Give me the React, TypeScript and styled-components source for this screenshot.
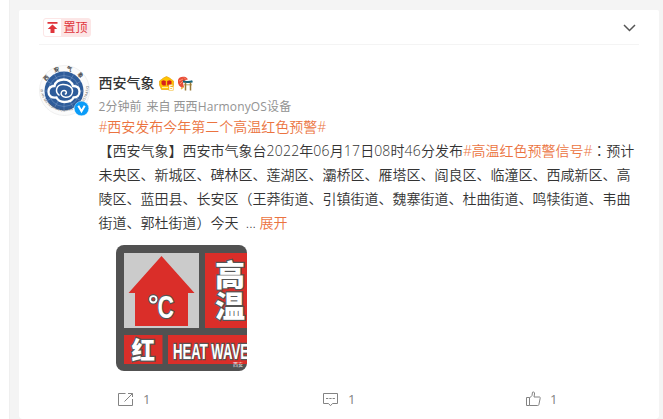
import { ReactNode } from 'react';
import styled, { createGlobalStyle } from 'styled-components';

const GlobalStyle = createGlobalStyle`
  * {
    box-sizing: border-box;
  }
  body {
    margin: 0;
    background: #fff;
    overflow: hidden;
    font-family: 'Open Sans', 'Noto Sans CJK SC', sans-serif;
  }
`;

const Page = styled.div`
  height: 419px;
  margin-left: 9px;
  padding: 10px 4px 0 9px;
  background: #f4f4f4;
  border-left: 1px solid #efefef;
`;

const Card = styled.article`
  height: 409px;
  padding: 0 20px;
  background: #fff;
  border-radius: 2px 2px 4px 4px;
`;

const CardHeader = styled.header`
  display: flex;
  align-items: center;
  justify-content: space-between;
  height: 35px;
  padding: 0 4px;
  border-bottom: 1px solid #f4f4f4;
`;

const PinTag = styled.div`
  display: flex;
  width: 48px;
  height: 19px;
  margin-top: 1px;
  border: 1px solid #fce6e6;
  border-radius: 3px;
  background: #fce6e6;
  overflow: hidden;
`;

const PinIcon = styled.span`
  display: flex;
  align-items: center;
  justify-content: center;
  width: 17px;
  background: #fff;
`;

const PinLabel = styled.span`
  flex: 1;
  font-size: 12px;
  line-height: 17px;
  text-align: center;
  white-space: nowrap;
  color: #e0353b;
`;

const MenuButton = styled.button`
  display: flex;
  padding: 0;
  margin: 2px -1px 0 0;
  border: none;
  background: none;
`;

const Post = styled.div`
  display: flex;
  gap: 8.6px;
  padding-top: 20px;
`;

const AvatarWrap = styled.div`
  position: relative;
  flex: none;
  width: 51px;
  height: 52px;
`;

const AvatarArt = styled.svg`
  display: block;
  overflow: visible;
`;

const Verified = styled.svg`
  position: absolute;
  right: 1px;
  bottom: 1px;
`;

const Body = styled.div`
  flex: 1;
  white-space: nowrap;
`;

const NameRow = styled.div`
  display: flex;
  align-items: center;
  height: 24px;
  margin-top: 6px;
  gap: 3px;
`;

const Name = styled.span`
  margin-right: 1px;
  font-size: 14px;
  font-weight: 500;
  line-height: 24px;
  color: #333;
`;

const Meta = styled.div`
  display: flex;
  gap: 5px;
  height: 20px;
  font-size: 12px;
  line-height: 23px;
  color: #939393;
`;

const Device = styled.span`
  margin-left: -2px;
  letter-spacing: 0.14px;
`;

const Content = styled.div`
  font-size: 14px;
  font-weight: 350;
  line-height: 24px;
  color: #333;
`;

const Line = styled.div`
  height: 24px;
`;

const Topic = styled.a`
  color: #eb7340;
`;

const Hash = styled.span`
  letter-spacing: -0.4px;
`;

const Num = styled.span`
  letter-spacing: 0.2px;
`;

// the TC face centres the full-width colon in its cell
const Colon = styled.span`
  font-family: 'Noto Sans CJK TC', sans-serif;
  line-height: 0;
`;

const Photo = styled.svg`
  display: block;
  margin: 10px 0 0 17.4px;
  border-radius: 8px;
`;

const Actions = styled.footer`
  display: grid;
  grid-template-columns: 204px 204px 1fr;
  height: 18px;
  margin-top: 19px;
  padding-left: 78px;
`;

const Action = styled.div`
  display: flex;
  align-items: center;
  gap: 9px;
  font-size: 13px;
  line-height: 18px;
  color: #838383;
`;

const sign = (key: string, children: ReactNode) => (
  <Topic key={key}>
    <Hash>#</Hash>
    {children}
    <Hash>#</Hash>
  </Topic>
);

function Avatar() {
  const rays = [0, 30, 60, 90, 120, 150];
  return (
    <AvatarWrap>
      <AvatarArt width="51" height="52" viewBox="0 0 51 52">
        <defs>
          <path id="ring-top" d="M5.5 25.500 A20 20 0 0 1 45.5 25.500" />
          <path id="ring-bottom" d="M1.2 22 A24.300 24.300 0 1 0 49.8 22" />
        </defs>
        <circle cx="25.5" cy="25.5" r="25" fill="#fbfbfb" stroke="#e9e9e9" strokeWidth=".7" />
        <circle cx="25" cy="26" r="19.5" fill="#2e5c9a" />
        <g stroke="#7c9ac4" strokeWidth=".5" fill="none">
          {rays.map((angle) => (
            <path key={angle} d="M25 6.5V45.5" transform={`rotate(${angle} 25 26)`} />
          ))}
          <circle cx="25" cy="26" r="15.5" />
        </g>
        <path
          d="M15.500 21c.5-4 4.500-6.500 9-6.500s8.500 2.500 9.500 6.500c4 0 6.500 2 6.500 5.500S38 32.500 34.500 32.500c-1.500 3.500-5 4.500-9 4.500-3.500 0-6.500-1.500-8-4.500-5 .5-8-1.500-8-5.500s2.500-6 6-6z"
          fill="#2e5c9a"
          stroke="#fff"
          strokeWidth="2.300"
        />
        <path
          d="M20.500 30.500c-5-3.500-3.500-10.500 3-11 6-.4 10.500 3 10 7-.5 4-3.500 6-7 5.800-3.500-.2-5.200-3-4-5.300 1-2 4.300-2 4.800 0 .3 1.200-.4 2-1.500 2.100"
          fill="none"
          stroke="#fff"
          strokeWidth="1.500"
        />
        <text fontSize="5.500" fontWeight="700" fill="#444" fontFamily="Noto Sans CJK SC" letterSpacing="6.200">
          <textPath href="#ring-top" startOffset="9">西安气象</textPath>
        </text>
        <text fontSize="3.500" fill="#555">
          <textPath href="#ring-bottom" textLength="78" startOffset="2">XI AN METEOROLOGICAL ADMINISTRATION</textPath>
        </text>
      </AvatarArt>
      <Verified width="15" height="15" viewBox="0 0 15 15">
        <circle cx="7.500" cy="7.500" r="7.300" fill="#0a9cf8" stroke="#fff" strokeWidth=".4" />
        <path d="M4.300 4.800L7.500 10.300L10.700 4.800" fill="none" stroke="#fff" strokeWidth="2" />
      </Verified>
    </AvatarWrap>
  );
}

function CrownBadge() {
  return (
    <svg width="15" height="15" viewBox="0 0 15 15">
      <path d="M.5 5L2.500 3.500 4.500 2 7.500.5 10.500 2 12.500 3.500 14.500 5V9L12.500 13.500H2.500L.5 9z" fill="#ffc400" stroke="#e8a010" strokeWidth=".7" />
      <path d="M2.500 5L4.500 4.200 6.800 5V9.500H4L2.500 8zM12.500 5l-2-.8L8.200 5v4.500H11L12.500 8z" fill="#d6211c" />
      <path d="M3 11.500h6" stroke="#fff199" strokeWidth="1.200" />
      <path d="M9.500 8.500h5v6h-5z" fill="#f3b51c" />
      <path d="M13.500 9.200h-2.700v4.300h2.500v-2h-2" fill="none" stroke="#fff" strokeWidth="1.100" />
    </svg>
  );
}

function FestivalBadge() {
  return (
    <svg width="16" height="15" viewBox="0 0 16 15">
      <path d="M1 4C2 1 5 .3 9 1.200l2 2L8 4.500 6 7 7 11 5 12 2 9.500 1 7z" fill="#e84d37" />
      <path d="M2 5l4-2M3 8l3-3M7 1.500l2 2" stroke="#ffb28d" strokeWidth=".7" />
      <path d="M6 5.200Q11 7 15.500 5.200" fill="none" stroke="#16647d" strokeWidth="2" />
      <path d="M7 8.800h8" stroke="#c8a85a" strokeWidth="1" />
      <path d="M8.500 6.500v8M13.500 6.500v8" stroke="#987836" strokeWidth="1.500" />
      <path d="M4 13l2.500-2" stroke="#f2b33d" strokeWidth="1.500" />
    </svg>
  );
}

function WarningSign() {
  return (
    <Photo width="131" height="126" viewBox="0 0 131 126">
      <path d="M0 0h131v126H0z" fill="#515151" />
      <path d="M8 8h75v75H8z" fill="#cbcbcb" />
      <path d="M45.500 11L78.500 48H72v33H19V48h-6.500z" fill="#da2e29" />
      <path d="M89 8h42v75H89zM8 90h38.500v29H8zM52 90h79v29H52z" fill="#da2e29" />
      <g
        fill="#fff"
        stroke="#555"
        strokeWidth="2.400"
        paintOrder="stroke"
        fontFamily="Liberation Sans, Noto Sans CJK SC, sans-serif"
        fontWeight="700"
      >
        <circle cx="37.300" cy="54.300" r="3.200" fill="none" stroke="#555" strokeWidth="4" />
        <circle cx="37.300" cy="54.300" r="3.200" fill="none" stroke="#fff" strokeWidth="1.900" />
        <text x="41.500" y="72.500" fontSize="31" textLength="16.500" lengthAdjust="spacingAndGlyphs">C</text>
        <g fontWeight="900" fontFamily="Noto Sans CJK SC, sans-serif">
          <text x="99" y="40.500" fontSize="30">高</text>
          <text x="99" y="72" fontSize="30">温</text>
          <text x="15.500" y="113.500" fontSize="23.500">红</text>
        </g>
        <text x="57" y="113.500" fontSize="22" textLength="76" lengthAdjust="spacingAndGlyphs">HEAT WAVE</text>
      </g>
      <text x="117" y="121" fontSize="5" fill="#eee">西安</text>
    </Photo>
  );
}

export default function App() {
  return (
    <>
      <GlobalStyle />
      <Page>
        <Card>
          <CardHeader>
            <PinTag>
              <PinIcon>
                <svg width="11" height="11" viewBox="0 0 11 11" fill="#e0353b">
                  <path d="M.5 0h10v1.800H.5zM5.500 2.500L10.300 7H7.500v4H3.500V7H.7z" />
                </svg>
              </PinIcon>
              <PinLabel>置顶</PinLabel>
            </PinTag>
            <MenuButton aria-label="更多">
              <svg width="13" height="8" viewBox="0 0 13 8" fill="none" stroke="#555" strokeWidth="1.500">
                <path d="M1 1L6.500 6.500L12 1" />
              </svg>
            </MenuButton>
          </CardHeader>
          <Post>
            <Avatar />
            <Body>
              <NameRow>
                <Name>西安气象</Name>
                <CrownBadge />
                <FestivalBadge />
              </NameRow>
              <Meta>
                <span>2分钟前</span>
                <span>来自</span>
                <Device>西西HarmonyOS设备</Device>
              </Meta>
              <Content>
                <Line>{sign('title', '西安发布今年第二个高温红色预警')}</Line>
                <Line>
                  【西安气象】西安市气象台<Num>2022</Num>年<Num>06</Num>月<Num>17</Num>日<Num>08</Num>时<Num>46</Num>分发布
                  {sign('signal', '高温红色预警信号')}
                  <Colon>：</Colon>预计
                </Line>
                <Line>未央区、新城区、碑林区、莲湖区、灞桥区、雁塔区、阎良区、临潼区、西咸新区、高</Line>
                <Line>陵区、蓝田县、长安区（王莽街道、引镇街道、魏寨街道、杜曲街道、鸣犊街道、韦曲</Line>
                <Line>
                  街道、郭杜街道）今天 &nbsp;... <Topic>展开</Topic>
                </Line>
              </Content>
              <WarningSign />
            </Body>
          </Post>
          <Actions>
            <Action>
              <svg width="17" height="15" viewBox="0 0 17 15" fill="none" stroke="#838383">
                <path d="M8.500 1.500H1.500v12h14V7M7.500 9.500L15.500 1.500M11 1.500h4.500V5" />
              </svg>
              1
            </Action>
            <Action>
              <svg width="18" height="15" viewBox="0 0 18 15" fill="none" stroke="#838383">
                <path d="M2.500 1.500h14v10h-5l-2 2.200-2-2.200h-5z" />
                <path d="M5 6.500h9.500" strokeDasharray="2.300 1" />
              </svg>
              1
            </Action>
            <Action>
              <svg width="16" height="16" viewBox="0 0 16 16" fill="none" stroke="#838383" strokeLinejoin="round">
                <path d="M1.500 6.500h3v8h-3zM4.500 7L7 4.500 7.500 1.200C9 .6 9.800 1.500 9.500 3L9 6h5.500c.7 0 .8.600.7 1.200l-1.300 6.300c-.2.800-.6 1-1.200 1H4.500" />
              </svg>
              1
            </Action>
          </Actions>
        </Card>
      </Page>
    </>
  );
}
